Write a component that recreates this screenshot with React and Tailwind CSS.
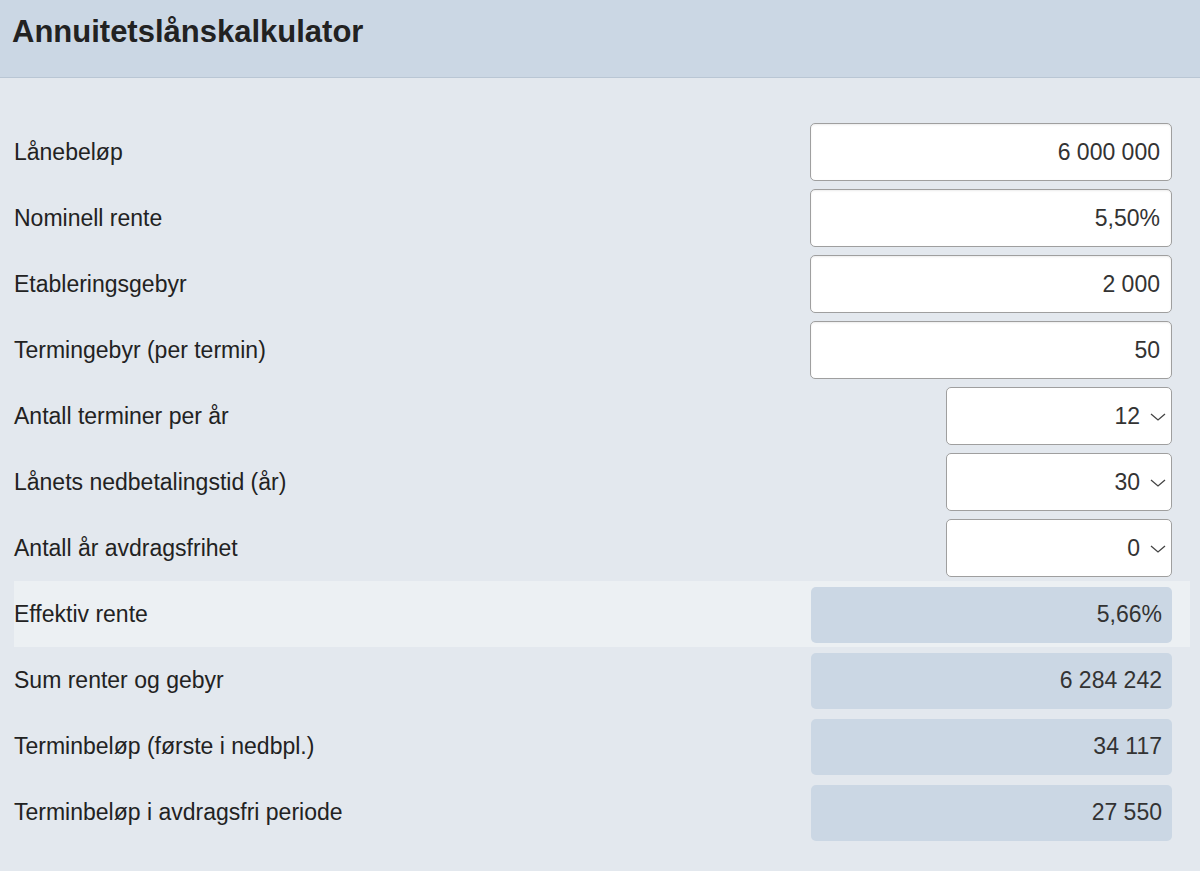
const INPUTS = [
  { label: "Lånebeløp", value: "6 000 000" },
  { label: "Nominell rente", value: "5,50%" },
  { label: "Etableringsgebyr", value: "2 000" },
  { label: "Termingebyr (per termin)", value: "50" },
];

const SELECTS = [
  { label: "Antall terminer per år", value: "12" },
  { label: "Lånets nedbetalingstid (år)", value: "30" },
  { label: "Antall år avdragsfrihet", value: "0" },
];

const RESULTS = [
  { label: "Effektiv rente", value: "5,66%", highlight: true },
  { label: "Sum renter og gebyr", value: "6 284 242" },
  { label: "Terminbeløp (første i nedbpl.)", value: "34 117" },
  { label: "Terminbeløp i avdragsfri periode", value: "27 550" },
];

function Row({ label, highlight, children }) {
  return (
    <div
      className={
        "flex items-center justify-between h-[66px] pr-[18px] " +
        (highlight ? "bg-[#ecf0f3]" : "")
      }
    >
      <span className="text-[23px] text-[#222]">{label}</span>
      {children}
    </div>
  );
}

export default function App() {
  return (
    <div className="min-h-[871px] bg-[#e3e8ee] font-['Liberation_Sans',Arial,sans-serif]">
      <header className="h-[78px] bg-[#cbd7e4] border-b border-[#b9c6d4] px-[12px] pt-[14px]">
        <h1 className="text-[31px] font-bold text-[#222] leading-[36px]">
          Annuitetslånskalkulator
        </h1>
      </header>
      <div className="pt-[41px] pl-[14px] pr-[10px]">
        {INPUTS.map((item) => (
          <Row key={item.label} label={item.label}>
            <div className="w-[362px] h-[58px] bg-white border border-[#9f9f9f] rounded-[5px] shadow-[inset_0_1px_2px_rgba(0,0,0,0.08)] flex items-center justify-end pr-[11px] text-[23px] text-[#333]">
              {item.value}
            </div>
          </Row>
        ))}
        {SELECTS.map((item) => (
          <Row key={item.label} label={item.label}>
            <div className="w-[226px] h-[58px] bg-white border border-[#9f9f9f] rounded-[5px] flex items-center justify-end pr-[5px] gap-[10px] text-[23px] text-[#333]">
              {item.value}
              <svg width="16" height="8" viewBox="0 0 16 8" fill="none" className="mt-[1px]">
                <path d="M1 1 L8 7 L15 1" stroke="#444" strokeWidth="1.3" />
              </svg>
            </div>
          </Row>
        ))}
        {RESULTS.map((item) => (
          <Row key={item.label} label={item.label} highlight={item.highlight}>
            <div className="w-[361px] h-[56px] mt-[1px] bg-[#cbd7e4] rounded-[5px] flex items-center justify-end pr-[10px] text-[23px] text-[#333]">
              {item.value}
            </div>
          </Row>
        ))}
      </div>
    </div>
  );
}
